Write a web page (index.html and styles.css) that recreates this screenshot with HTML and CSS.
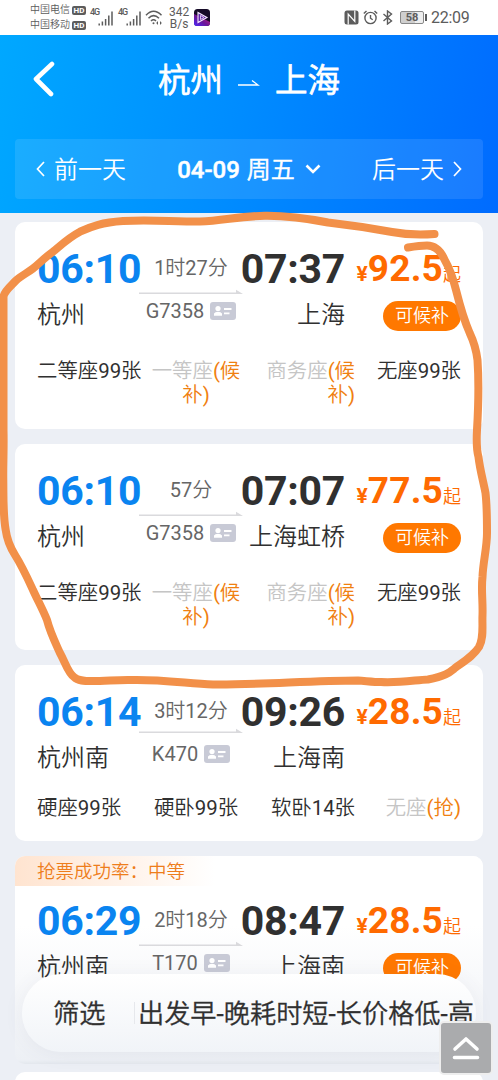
FILE: index.html
```
<!DOCTYPE html>
<html lang="zh-CN">
<head>
<meta charset="utf-8">
<title>杭州 - 上海</title>
<link rel="stylesheet" href="styles.css">
</head>
<body>
<svg class="defs" width="0" height="0">
  <symbol id="signal" viewBox="0 0 16 15"><path d="M1.2 14.5v-2M4.4 14.5v-4M7.6 14.5V8M10.8 14.5V4.5M14 14.5V.5" stroke="#5c5c5c" stroke-width="1.5"/></symbol>
  <symbol id="idcard" viewBox="0 0 26 18"><rect width="26" height="18" rx="3" fill="#c8cad6"/><circle cx="8" cy="6.5" r="2.6" fill="#fff"/><path d="M4 13.7V11.5q1-1.8 4-1.8t4 1.8v2.2z" fill="#fff"/><path d="M14 7h7.5M14 11.3h5.5" stroke="#fff" stroke-width="1.8"/></symbol>
  <symbol id="arrow" viewBox="0 0 104 6"><path d="M0 3.600h97V.8L104 5H0z" fill="#dadadd"/></symbol>
</svg>
<div class="screen">
  <div class="status">
    <div class="carriers">
      <div class="carrier"><span>中国电信</span><b class="hd">HD</b></div>
      <div class="carrier"><span>中国移动</span><b class="hd">HD</b></div>
    </div>
    <div class="cell"><span>4G</span><svg width="16" height="15"><use href="#signal"/></svg></div>
    <div class="cell"><span>4G</span><svg width="16" height="15"><use href="#signal"/></svg></div>
    <svg class="wifi" width="18" height="16" viewBox="0 0 18 16" fill="none" stroke="#5c5c5c" stroke-width="1.5"><path d="M1 5.2Q8.5-2.8 16.5 5.2M3.5 8.2Q8.5 3 14 8.2M6 11Q8.5 8.6 11 11"/><circle cx="8.5" cy="13.3" r="1" fill="#5c5c5c" stroke="none"/><path d="M13 11l-1.8 2 1.8 2zM15 11l1.8 2-1.8 2z" fill="#5c5c5c" stroke="none"/></svg>
    <div class="speed"><span>342</span><span>B/s</span></div>
    <svg class="app" width="16" height="17" viewBox="0 0 16 17"><defs><linearGradient id="ag" x1="0" y1="1" x2="1" y2="0"><stop offset="0" stop-color="#4a25ff"/><stop offset=".45" stop-color="#6a1696"/><stop offset="1" stop-color="#e8217b"/></linearGradient></defs><rect width="16" height="17" rx="3.5" fill="#160b28"/><path d="M0 5l16 8v1q0 3-3 3H3q-3 0-3-3z" fill="url(#ag)"/><path d="M4 3.5v10l9-5z" fill="#5d22a5" stroke="#f6eaff" stroke-width="1.1"/><path d="M6.5 6.5v4l3.5-2z" fill="none" stroke="#f6eaff" stroke-width=".8"/></svg>
    <div class="right">
      <svg width="15" height="15" viewBox="0 0 15 15"><rect x=".5" y=".5" width="14" height="14" rx="2.500" fill="#5c5c5c"/><path d="M4.200 14.500V4l6.600 7.500V.5" fill="none" stroke="#fff" stroke-width="1.200"/></svg>
      <svg width="15" height="15" viewBox="0 0 15 15" fill="none" stroke="#5c5c5c" stroke-width="1.4"><circle cx="7.5" cy="8" r="5.6"/><path d="M7.5 5v3.2l2.2 1.6M.8 3.6L3.5 1M14.2 3.6L11.5 1"/></svg>
      <svg width="11" height="15" viewBox="0 0 11 15" fill="none" stroke="#5c5c5c" stroke-width="1.4"><path d="M1.5 4l8 7-4 3V1l4 3-8 7"/></svg>
      <div class="battery"><div class="shell">58</div><i></i></div>
      <span class="clock">22:09</span>
    </div>
  </div>
  <header class="head">
    <div class="route">
      <svg class="back" width="22" height="36" viewBox="0 0 22 36"><path d="M19 3L3 18l15 15" fill="none" stroke="#fff" stroke-width="4.6" stroke-linecap="round" stroke-linejoin="round"/></svg>
      <h1><span>杭州</span><svg width="22" height="6" viewBox="0 0 22 6"><path d="M0 5h20l-6-4.5" fill="none" stroke="#fff" stroke-width="1.3"/></svg><span>上海</span></h1>
    </div>
    <nav class="dates">
      <a><svg width="9" height="16" viewBox="0 0 9 16"><path d="M8 1L1.5 8 8 15"/></svg><span>前一天</span></a>
      <a class="today"><b>04-09 周五</b><svg width="16" height="10" viewBox="0 0 16 10"><path d="M1.5 1.5L8 8l6.500-6.500"/></svg></a>
      <a><span>后一天</span><svg width="9" height="16" viewBox="0 0 9 16"><path d="M1 1l6.500 7L1 15"/></svg></a>
    </nav>
  </header>
  <main class="list">
    <article class="card">
      <div class="trip">
        <div class="stop from"><b>06:10</b><span>杭州</span></div>
        <div class="via"><span>1时27分</span><svg width="104" height="6"><use href="#arrow"/></svg><div class="no">G7358<svg width="26" height="18"><use href="#idcard"/></svg></div></div>
        <div class="stop to"><b>07:37</b><span>上海</span></div>
        <div class="fare"><div class="price"><i>¥</i><b>92.5</b><em>起</em></div><div class="tag">可候补</div></div>
      </div>
      <div class="seats"><div>二等座99张</div><div><s>一等座</s><u>(候补)</u></div><div><s>商务座</s><u>(候补)</u></div><div>无座99张</div></div>
    </article>
    <article class="card">
      <div class="trip">
        <div class="stop from"><b>06:10</b><span>杭州</span></div>
        <div class="via"><span>57分</span><svg width="104" height="6"><use href="#arrow"/></svg><div class="no">G7358<svg width="26" height="18"><use href="#idcard"/></svg></div></div>
        <div class="stop to"><b>07:07</b><span>上海虹桥</span></div>
        <div class="fare"><div class="price"><i>¥</i><b>77.5</b><em>起</em></div><div class="tag">可候补</div></div>
      </div>
      <div class="seats"><div>二等座99张</div><div><s>一等座</s><u>(候补)</u></div><div><s>商务座</s><u>(候补)</u></div><div>无座99张</div></div>
    </article>
    <article class="card plain">
      <div class="trip">
        <div class="stop from"><b>06:14</b><span>杭州南</span></div>
        <div class="via"><span>3时12分</span><svg width="104" height="6"><use href="#arrow"/></svg><div class="no">K470<svg width="26" height="18"><use href="#idcard"/></svg></div></div>
        <div class="stop to"><b>09:26</b><span>上海南</span></div>
        <div class="fare"><div class="price"><i>¥</i><b>28.5</b><em>起</em></div></div>
      </div>
      <div class="seats"><div>硬座99张</div><div>硬卧99张</div><div>软卧14张</div><div><s>无座</s><u>(抢)</u></div></div>
    </article>
    <article class="card rated">
      <div class="chance">抢票成功率：中等</div>
      <div class="trip">
        <div class="stop from"><b>06:29</b><span>杭州南</span></div>
        <div class="via"><span>2时18分</span><svg width="104" height="6"><use href="#arrow"/></svg><div class="no">T170<svg width="26" height="18"><use href="#idcard"/></svg></div></div>
        <div class="stop to"><b>08:47</b><span>上海南</span></div>
        <div class="fare"><div class="price"><i>¥</i><b>28.5</b><em>起</em></div><div class="tag">可候补</div></div>
      </div>
    </article>
    <article class="card next"></article>
  </main>
  <div class="sortbar"><span class="filter">筛选</span><div class="sorts"><span>出发早-晚</span><span>耗时短-长</span><span>价格低-高</span></div></div>
  <svg class="marker" width="498" height="1080" viewBox="0 0 498 1080"><path d="M434.500 234C420 235 405 234.500 392 232C370 228 350 225 328 222.500C310 219 290 215.500 265 215.800C240 216 222 221 200 221.500C170 221.500 150 219.500 123 221C102 222.500 92 226 80 231.700C68 238 60 246 53 251.700C44 258 39 264 33 268.500C27 273 21 276 16 280.500C11 286 4 291 3.500 297L3.500 430C4 450 3 465 3.300 480C3.500 500 3 515 5.700 530C7 540 10 547 15 555C22 566 27 577 33 590C38 601 43 610 47 620C50 632 55 642 60 653C66 664 68 673 74 677C78 681 84 681 92 681C107 681 118 679.500 133 680C160 679.500 185 683 213 684.500C260 685 310 680.500 358 680.500C366 681 374 682 381 682C400 683 416 680 428 679.500C446 676 450 672 455 668C466 660 474 655 479 647C484 638 482 626 482.500 615C483 600 481 590 482.500 577C483 562 487 548 487 533C487 518 487 506 485.500 493C483 480 480 470 478.500 457C476 448 476.500 440 477 430C478.500 405 479 382 477.500 360C476 348 474 342 469.700 333C464 320 460 306 456 290C453 278 450 269 444.700 260C440 249 434 245.500 427 245.500C420 245.500 414 246.500 408 247.500"/></svg>
  <button class="totop" aria-label="top"><svg width="28" height="24" viewBox="0 0 28 24"><path d="M3 13L14 3l11 10M2.500 21.500h23"/></svg></button>
</div>
</body>
</html>
```
FILE: styles.css
```
* { box-sizing: border-box; }
body { margin: 0; font-family: Roboto, "Noto Sans CJK SC DemiLight", "Noto Sans CJK SC", sans-serif; color: #303030; }
svg { display: block; flex: none; }
b { font-weight: 700; }
i, em { font-style: normal; }
s, u { text-decoration: none; }
.defs { position: absolute; }
.screen { position: relative; width: 498px; height: 1080px; overflow: hidden; background: #eceff5; }

.status { height: 35px; background: #fff; display: flex; align-items: center; padding-left: 30px; color: #5c5c5c; }
.carriers { width: 60px; display: grid; gap: 1px; }
.carrier { display: flex; align-items: center; gap: 2px; font-size: 10px; line-height: 14px; white-space: nowrap; }
.hd { width: 14px; height: 9px; border-radius: 2px; background: #5c5c5c; color: #fff; font-size: 8px; line-height: 9px; text-align: center; }
.cell { display: flex; width: 28px; align-items: flex-start; }
.cell span { width: 8px; font-size: 9px; line-height: 8px; margin-top: -1px; font-weight: 500; letter-spacing: -1px; }
.cell svg { margin-top: 2px; }
.wifi { margin: 0 6px 0 -1px; }
.speed { width: 19px; font-size: 12px; line-height: 12px; display: grid; justify-items: center; }
.app { margin-left: 6px; }
.right { margin-left: auto; padding-right: 29px; display: flex; align-items: center; gap: 4px; }
.battery { display: flex; align-items: center; margin-left: 3px; }
.shell { width: 24px; height: 13px; border: 1px solid #888; border-radius: 2px; background: linear-gradient(90deg, #cfcfcf 62%, #eee 62%); font-size: 11px; font-weight: 700; line-height: 11px; text-align: center; }
.battery i { width: 2px; height: 7px; margin-left: 1px; background: #5c5c5c; }
.clock { font-size: 16px; line-height: 18px; letter-spacing: -.3px; width: 38px; white-space: nowrap; }

.head { height: 178px; background: linear-gradient(100deg, #00a8ff 0%, #008cff 48%, #006bff 100%); color: #fff; padding: 0 15px; }
.route { height: 104px; display: grid; grid-template-columns: 60px 1fr 60px; padding-top: 26px; }
.back { margin: 0 0 0 18px; }
h1 { margin: 1px 0 0; display: flex; justify-content: center; gap: 15px; font-size: 32.500px; line-height: 38px; font-weight: 500; -webkit-text-stroke: .8px #fff; }
h1 svg { margin-top: 18px; }
.dates { height: 60px; border-radius: 4px; background: rgba(255, 255, 255, .1); display: flex; align-items: center; justify-content: space-between; padding: 0 21px; font-size: 24px; }
.dates a { display: flex; align-items: center; gap: 9px; }
.dates a > span, .dates b { margin-top: -4px; }
.dates path { fill: none; stroke: #fff; stroke-width: 1.700; }
.dates b { font-size: 24px; font-weight: 500; word-spacing: 1px; -webkit-text-stroke: .5px #fff; }
.dates .today { gap: 10px; }
.dates .today path { stroke-width: 2.600; }

.list { padding: 9.300px 15px 0; display: grid; gap: 15px; }
.card { height: 206.300px; background: #fff; border-radius: 10px; padding: 22px; overflow: hidden; }
.trip { display: grid; grid-template-columns: 102px 104px 102px 116px; }
.stop { display: grid; grid-template-columns: 100%; white-space: nowrap; align-content: start; }
.stop b { font-size: 41px; line-height: 48px; letter-spacing: -.3px; margin-top: 1px; }
.stop span { font-size: 24px; line-height: 40px; margin-top: 2px; }
.from b { color: #0a84f0; }
.to { justify-items: end; }
.via { display: flex; flex-direction: column; align-items: center; font-size: 20px; color: #666; }
.via > span { line-height: 24px; margin-top: 12px; }
.via > svg { margin-top: 9px; }
.no { display: flex; align-items: center; gap: 6px; line-height: 24px; margin-top: 4px; }
.fare { display: flex; flex-direction: column; align-items: flex-end; color: #ff6a00; }
.price { display: flex; align-items: baseline; line-height: 48px; white-space: nowrap; margin-top: 1px; }
.price i { font-size: 21px; font-weight: 700; }
.price b { font-size: 37px; letter-spacing: .2px; }
.price em { font-size: 18px; }
.tag { width: 78px; height: 30px; border-radius: 15px; background: #ff7800; color: #fff; font-size: 18px; line-height: 29px; text-align: center; margin-top: 2px; }
.seats { display: grid; grid-template-columns: repeat(4, 106px); font-size: 20.400px; line-height: 24px; margin-top: 24px; }
.seats div { text-align: right; }
.seats div:nth-child(1) { text-align: left; white-space: nowrap; }
.seats div:nth-child(2) { text-align: center; }
.seats s { color: #c5c5c5; }
.seats u { color: #f08010; }
.plain { height: 176px; }
.plain .via > svg { margin-top: 5px; }
.plain .no { margin-top: 8px; }
.plain .seats { margin-top: 18px; }
.rated { height: 208px; padding-top: 0; background: linear-gradient(#fff 70px, #edf0f5 204px, #e3e7ed); }
.rated .trip { margin-top: 10px; }
.chance { height: 30px; margin: 0 -22px; padding-left: 22px; font-size: 18.500px; line-height: 33px; color: #ee7d1b; background: linear-gradient(90deg, #ffe4d0, #fff 200px); }
.next { margin-top: -7px; }

.sortbar { position: absolute; left: 22px; right: 22px; top: 974px; height: 78px; border-radius: 39px; background: linear-gradient(#fff, #f1f4f8); box-shadow: 0 2px 20px rgba(80, 90, 110, .07); display: flex; align-items: center; padding-left: 31px; font-size: 26.200px; line-height: 30px; white-space: nowrap; -webkit-text-stroke: .3px #303030; }
.filter { width: 81px; margin-top: 1px; }
.sorts { display: flex; border-left: 1px solid #e6e8ec; padding-left: 3px; line-height: 20px; }
.sorts span { margin-top: 2px; }
.marker { position: absolute; left: 0; top: 0; }
.marker path { fill: none; stroke: #f29049; stroke-width: 8; stroke-linecap: round; stroke-linejoin: round; }
.totop { position: absolute; left: 439px; top: 1021px; width: 54px; height: 54px; padding: 0; border: 2px solid #eee; border-radius: 5px; background: #aaabad; display: grid; place-items: center; }
.totop path { fill: none; stroke: #fff; stroke-width: 3.600; stroke-linecap: round; stroke-linejoin: round; }
```
